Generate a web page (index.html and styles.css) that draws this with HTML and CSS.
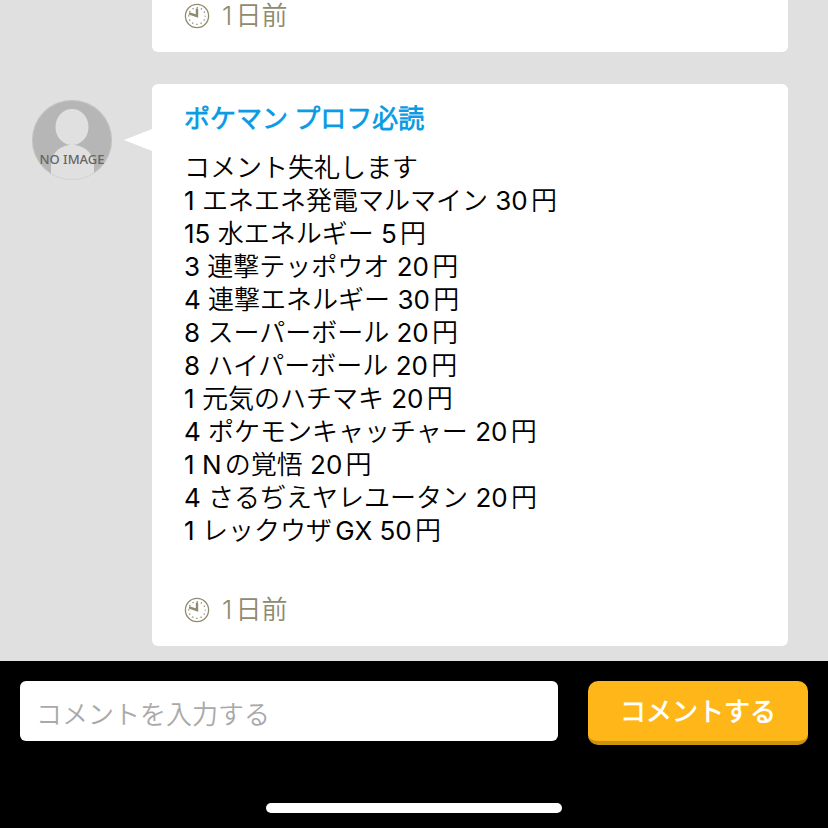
FILE: index.html
```html
<!DOCTYPE html>
<html lang="ja">
<head>
    <meta charset="UTF-8">
    <meta name="viewport" content="width=device-width, initial-scale=1.0">
    <title>コメント</title>
    <link rel="stylesheet" href="styles.css">
</head>
<body>
    <!-- Clock icon shared by the comments -->
    <svg class="sprite" aria-hidden="true">
        <symbol id="clock" viewBox="0 0 26 26">
            <circle cx="13" cy="13" r="11.6" fill="none" stroke="currentColor" stroke-width="1.3"/>
            <circle cx="13" cy="13" r="8.3" fill="none" stroke="currentColor" stroke-width="1.3" stroke-dasharray="1.3 3.046" stroke-dashoffset="0.65"/>
            <path d="M13 5.500V13L5 10.300" fill="none" stroke="currentColor" stroke-width="2.4"/>
        </symbol>
    </svg>

    <main class="comments">
        <article class="comment">
            <div class="bubble">
                <p class="time"><svg class="clock"><use href="#clock"/></svg>1日前</p>
            </div>
        </article>

        <article class="comment">
            <svg class="avatar" viewBox="0 0 80 80" role="img" aria-label="NO IMAGE">
                <clipPath id="round"><circle cx="40" cy="40" r="40"/></clipPath>
                <g clip-path="url(#round)">
                    <rect width="80" height="80" fill="#b6b6b6"/>
                    <path d="M19 80V66C19 53 28 45 40 45S62 53 62 66V80Z" fill="#e0e0e0"/>
                    <ellipse cx="40" cy="27" rx="16.5" ry="18" fill="#e0e0e0"/>
                </g>
                <circle cx="40" cy="40" r="39.5" fill="none" stroke="#cfcfcf" stroke-width="0.5"/>
                <text class="avatar-text" x="40" y="64" text-anchor="middle">NO IMAGE</text>
            </svg>
            <div class="bubble arrow">
                <h2 class="name"><a href="#">ポケマン プロフ必読</a></h2>
                <p class="text">コメント失礼します<br>
                1 エネエネ発電マルマイン 30円<br>
                15 水エネルギー 5円<br>
                3 連撃テッポウオ 20円<br>
                4 連撃エネルギー 30円<br>
                8 スーパーボール 20円<br>
                8 ハイパーボール 20円<br>
                1 元気のハチマキ 20円<br>
                4 ポケモンキャッチャー 20円<br>
                1 Nの覚悟 20円<br>
                4 さるぢえヤレユータン 20円<br>
                1 レックウザGX 50円</p>
                <p class="time"><svg class="clock"><use href="#clock"/></svg>1日前</p>
            </div>
        </article>
    </main>

    <footer class="footer">
        <form class="form">
            <input class="input" type="text" placeholder="コメントを入力する" aria-label="コメントを入力する">
            <button class="submit" type="button">コメントする</button>
        </form>
        <div class="home-bar"></div>
    </footer>
</body>
</html>
```
FILE: styles.css
```css
* {
    box-sizing: border-box;
}
body {
    margin: 0;
    height: 100vh;
    display: flex;
    flex-direction: column;
    overflow: hidden;
    background: #e0e0e0;
    color: #000;
    font-family: Inter, "Noto Sans CJK JP DemiLight", "Noto Sans CJK JP", sans-serif;
    font-size: 26px;
    line-height: 33px;
    text-autospace: normal;
}
h2, p {
    margin: 0;
}
.sprite {
    display: none;
}
.comments {
    flex: 1;
    min-height: 0;
    display: flex;
    flex-direction: column;
    justify-content: flex-end;
    gap: 32px;
    padding: 0 40px 15px 32px;
    overflow: hidden;
}
.comment {
    flex: none;
    display: grid;
    grid-template-columns: 80px 1fr;
    column-gap: 40px;
    align-items: start;
}
.avatar {
    width: 80px;
    height: 80px;
    margin-top: 16px;
}
.avatar-text {
    font-family: "Noto Sans", sans-serif;
    font-size: 13px;
    font-weight: 500;
    fill: #666;
}
.bubble {
    grid-column: 2;
    position: relative;
    padding: 20px 32px;
    background: #fff;
    border-radius: 6px;
}
.arrow::before {
    content: "";
    position: absolute;
    top: 45px;
    right: 100%;
    border: solid transparent;
    border-width: 11px 28px 11px 0;
    border-right-color: #fff;
}
.name {
    font-size: 26px;
    font-weight: 700;
    line-height: 30px;
}
.name a {
    color: #0d9ce4;
    text-decoration: none;
}
.text {
    margin: 17px 0 46px;
    font-weight: 400;
}
.time {
    display: flex;
    align-items: center;
    gap: 12px;
    color: #8f8a70;
    font-weight: 350;
}
.clock {
    width: 26px;
    height: 26px;
}
.footer {
    padding: 20px 20px 15px;
    background: #000;
}
.form {
    display: flex;
    gap: 30px;
}
.input {
    flex: 1;
    min-width: 0;
    height: 60px;
    padding: 6px 16px 0;
    border: 0;
    border-radius: 6px;
    background: #fff;
    font: inherit;
    font-weight: 350;
}
.input::placeholder {
    color: #a9a9a9;
    opacity: 1;
}
.submit {
    width: 220px;
    height: 64px;
    padding: 0;
    border: 0;
    border-bottom: 4px solid #c9920f;
    border-radius: 10px;
    background: #ffb619;
    color: #fff;
    font: inherit;
    font-weight: 700;
}
.home-bar {
    width: 296px;
    height: 10px;
    margin: 58px auto 0;
    border-radius: 5px;
    background: #fff;
}
```
